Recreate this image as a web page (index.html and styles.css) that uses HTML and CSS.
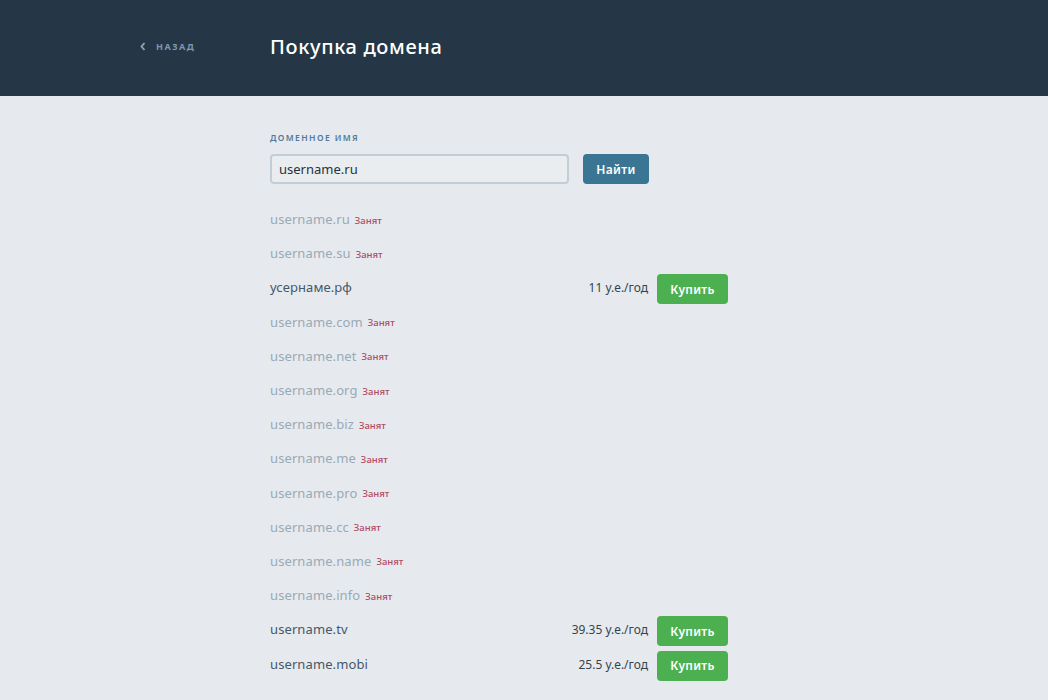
FILE: index.html
```html
<!DOCTYPE html>
<html lang="ru">
<head>
<meta charset="utf-8">
<title>Покупка домена</title>
<link rel="stylesheet" href="styles.css">
</head>
<body>
<header class="top">
  <a class="back" href="#">
    <svg class="back-icon" width="6" height="9" viewBox="0 0 6 9"><path d="M4.5 1 L1.5 4.5 L4.5 8" fill="none" stroke="currentColor" stroke-width="1.8"/></svg>
    <span>НАЗАД</span>
  </a>
  <h1 class="title">Покупка домена</h1>
</header>
<main class="content">
  <div class="label">ДОМЕННОЕ ИМЯ</div>
  <div class="search">
    <div class="input">username.ru</div>
    <button class="btn btn-find">Найти</button>
  </div>
  <ul class="list">
    <li class="row taken"><span class="name">username.ru</span><span class="busy">Занят</span></li>
    <li class="row taken"><span class="name">username.su</span><span class="busy">Занят</span></li>
    <li class="row free"><span class="name">усернаме.рф</span><span class="price">11 у.е./год</span><button class="btn btn-buy">Купить</button></li>
    <li class="row taken"><span class="name">username.com</span><span class="busy">Занят</span></li>
    <li class="row taken"><span class="name">username.net</span><span class="busy">Занят</span></li>
    <li class="row taken"><span class="name">username.org</span><span class="busy">Занят</span></li>
    <li class="row taken"><span class="name">username.biz</span><span class="busy">Занят</span></li>
    <li class="row taken"><span class="name">username.me</span><span class="busy">Занят</span></li>
    <li class="row taken"><span class="name">username.pro</span><span class="busy">Занят</span></li>
    <li class="row taken"><span class="name">username.cc</span><span class="busy">Занят</span></li>
    <li class="row taken"><span class="name">username.name</span><span class="busy">Занят</span></li>
    <li class="row taken"><span class="name">username.info</span><span class="busy">Занят</span></li>
    <li class="row free"><span class="name">username.tv</span><span class="price">39.35 у.е./год</span><button class="btn btn-buy">Купить</button></li>
    <li class="row free"><span class="name">username.mobi</span><span class="price">25.5 у.е./год</span><button class="btn btn-buy">Купить</button></li>
  </ul>
</main>
</body>
</html>
```
FILE: styles.css
```css
* { box-sizing: border-box; }
html, body { margin: 0; padding: 0; }
body {
  background: #e6eaee;
  font-family: "Noto Sans", "Open Sans", sans-serif;
  color: #3b4d5c;
  height: 700px;
  overflow: hidden;
}
.top {
  height: 96px;
  background: #253747;
  display: flex;
  align-items: center;
  padding-left: 140px;
}
.back {
  display: flex;
  align-items: center;
  gap: 10px;
  width: 130px;
  color: #7d97ab;
  text-decoration: none;
  font-size: 9px;
  font-weight: 700;
  letter-spacing: 1.5px;
  margin-top: -4px;
}
.back-icon { color: #8ea7bb; }
.title {
  margin: 0;
  color: #ffffff;
  font-size: 20px;
  font-weight: 500;
  letter-spacing: 0.65px;
  margin-top: -4px;
}
.content {
  padding: 0 0 0 270px;
  width: 728px;
}
.label {
  padding-top: 37px;
  font-size: 8.5px;
  font-weight: 600;
  letter-spacing: 1.4px;
  color: #52799a;
  line-height: 10px;
}
.search {
  display: flex;
  align-items: center;
  margin-top: 11px;
  gap: 14px;
}
.input {
  width: 299px;
  height: 30px;
  border: 2px solid #c2cdd6;
  border-radius: 4px;
  background: #e9edf0;
  font-size: 13px;
  color: #26333e;
  padding: 0 7px;
  display: flex;
  align-items: center;
}
.btn {
  border: none;
  font-family: inherit;
  color: #ffffff;
  font-weight: 600;
  font-size: 12px;
  border-radius: 4px;
  cursor: pointer;
  padding: 0;
}
.btn-find {
  width: 66px;
  height: 30px;
  background: #3a7594;
  letter-spacing: 0.4px;
}
.list {
  list-style: none;
  margin: 20px 0 0;
  padding: 0;
}
.row {
  height: 34.2px;
  display: flex;
  align-items: center;
  font-size: 13px;
}
.row .name { letter-spacing: 0.1px; padding-bottom: 4px; }
.taken .name { color: #9aa9b6; }
.busy {
  color: #b24a63;
  font-size: 9.5px;
  margin-left: 5px;
  padding-bottom: 2px;
  font-weight: 500;
}
.free .name { color: #45576a; }
.price {
  margin-left: auto;
  font-size: 12px;
  color: #34444f;
  margin-right: 9px;
  padding-bottom: 3px;
}
.btn-buy {
  width: 71px;
  height: 30px;
  background: #4caf50;
  letter-spacing: 0.3px;
}
```
